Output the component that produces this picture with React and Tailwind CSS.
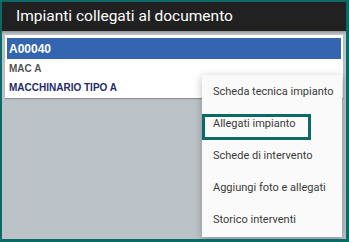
import React from "react";

export default function App() {
  const items = [
    "Scheda tecnica impianto",
    "Allegati impianto",
    "Schede di intervento",
    "Aggiungi foto e allegati",
    "Storico interventi",
  ];
  return (
    <div
      className="relative w-[349px] h-[242px] overflow-hidden border-l-2 border-t-2 border-r-[3px] border-b-[3px] border-[#0b6a66] bg-[#bcc3c8] flex flex-col"
      style={{ fontFamily: "Roboto, 'Liberation Sans', sans-serif" }}
    >
      <div className="h-[29px] shrink-0 bg-[#212121] flex items-center pl-[14px] text-white text-[15.5px] leading-none">
        Impianti collegati al documento
      </div>
      <div className="h-[3px] bg-gradient-to-b from-[#8e9499] to-[#bcc3c8]" />
      <div className="mt-[1px] mx-[3px] bg-white pt-[3px] pb-[2px] px-[2px] shadow-[0_1px_1px_rgba(0,0,0,0.25)]"
        style={{ fontFamily: "'Liberation Sans', Arial, sans-serif" }}>
        <div className="h-[21px] bg-[#3465b0] flex items-center pl-[2px] text-white font-bold text-[12px]">
          A00040
        </div>
        <div className="h-[19px] flex items-center pl-[2px] text-[#555555] font-bold text-[10px]">
          MAC A
        </div>
        <div className="h-[18px] flex items-center pl-[2px] text-[#1f2a6b] font-bold text-[10px]">
          MACCHINARIO TIPO A
        </div>
      </div>
      <div className="absolute left-[200px] top-[73px] w-[140px] h-[162px] bg-[#fafafa] shadow-[0_2px_8px_rgba(0,0,0,0.28)] flex flex-col pt-[1px]">
        {items.map((t, i) => (
          <div key={t} className="relative h-[32px] flex items-center pl-[11px] text-[#3a3a3a] text-[11px]">
            {i === 1 && (
              <div className="absolute left-0 top-[6px] w-[109px] h-[26px] border-[3px] border-[#0b6a66]" />
            )}
            <span className="relative">{t}</span>
          </div>
        ))}
      </div>
    </div>
  );
}
